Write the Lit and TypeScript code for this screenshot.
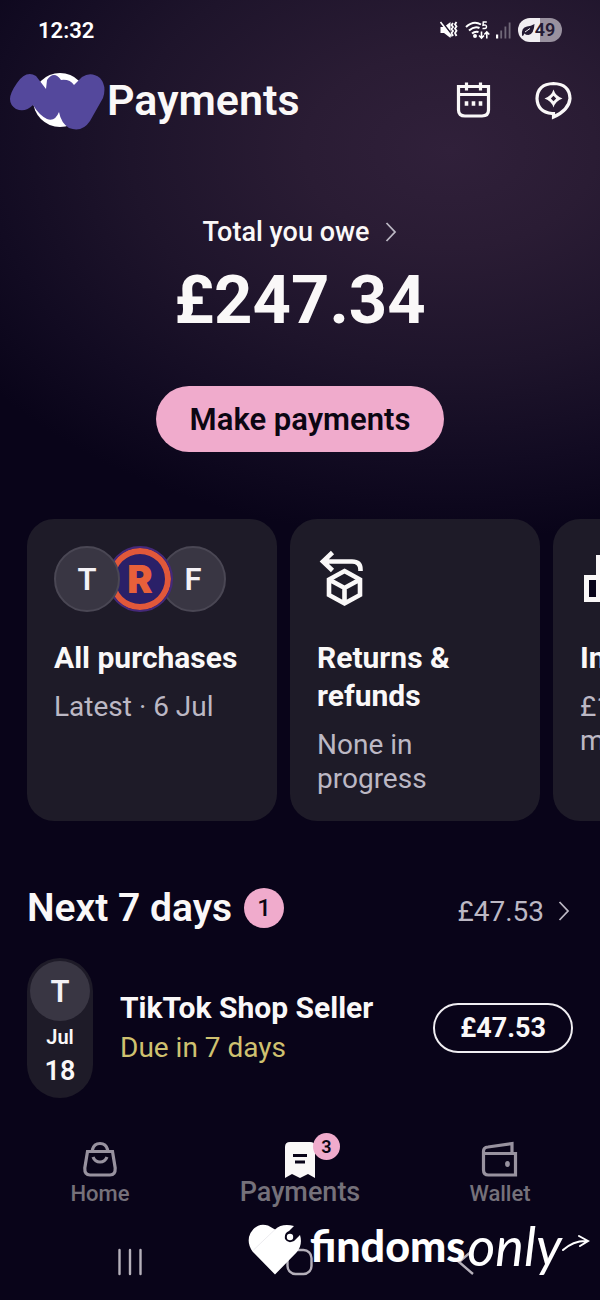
import { LitElement, html, css, svg } from "lit";
import { customElement, property } from "lit/decorators.js";

const chevron = html`<svg class="chevron" width="12" height="20" viewBox="0 0 12 20" aria-hidden="true">
  <path d="M1.500 1 10 10 1.500 19" fill="none" stroke="currentColor" stroke-width="1.800" />
</svg>`;

@customElement("status-bar")
class StatusBar extends LitElement {
  static styles = css`
    :host { display: flex; align-items: center; justify-content: space-between; height: 60px; padding: 0 38px; color: #fff; }
    svg { display: block; flex: none; }
    .time { font-size: 22px; font-weight: 600; }
    .icons { display: flex; align-items: center; gap: 5px; }
    .battery { display: flex; align-items: center; justify-content: center; box-sizing: border-box; width: 44px; height: 24px; padding-right: 4px; border-radius: 12px;
      background: linear-gradient(90deg, #f1eef2 49%, #99919f 49%); color: #241a33; font-size: 18px; font-weight: 600; line-height: 24px; }
  `;
  render() {
    return html`
      <span class="time">12:32</span>
      <div class="icons">
        <svg width="20" height="20" viewBox="0 0 20 20" fill="none" stroke="#fff" aria-hidden="true">
          <path d="M1.500 7H5L11.500 2V18L5 13H1.500Z" fill="#fff" stroke="none" />
          <path d="M3 2 14 16" stroke="#1f162c" stroke-width="2" />
          <path d="M1.500 2 12.500 16.500" stroke-width="1.600" />
          <path d="M14 3l-1.500 2 1.500 2-1.500 2 1.500 2-1.500 2 1.500 3M17.500 2l-1.500 2.200 1.500 2.200-1.500 2.200 1.500 2.200-1.500 2.200 1.500 3" stroke-width="1.800" />
        </svg>
        <svg width="27" height="20" viewBox="0 0 27 20" fill="none" stroke="#fff" stroke-width="2" aria-hidden="true">
          <path d="M2 7Q9.500 0 17 4.500M5 10.500Q10.500 5.500 15.500 8M8 13.500Q11 11 14.500 12" />
          <circle cx="11" cy="16" r="1" fill="#fff" />
          <path d="M22.800 2H19.300L19 5.200Q22.500 4.200 22.500 6.800 22.500 9.200 18.500 8.400" stroke-width="1.500" />
          <path d="M17.500 11.500V18M15 15.500l2.500 2.600 2.500-2.600M22.800 18.500V12M20.300 14.500l2.500-2.600 2.500 2.600" stroke-width="1.600" />
        </svg>
        <svg width="17" height="20" viewBox="0 0 17 20" aria-hidden="true">
          <path d="M0 14.500h2.200V18.500H0z" fill="#fff" />
          <path d="M4.300 10.500h1.800v8H4.300zM8.500 6.500h1.800v12H8.500zM12.700 2.500h1.800v16h-1.800z" fill="#706878" />
        </svg>
        <span class="battery">
          <svg width="14" height="14" viewBox="0 0 14 14" aria-hidden="true">
            <path d="M1 12.500Q0 4.500 6 3.500 10 3 13.500 1 13 11 7.500 12 4.500 12 3.500 10.500L2 13Z" fill="#241a33" />
            <path d="M4 9 9 5.500" stroke="#f1eef2" stroke-width="1" />
          </svg>49
        </span>
      </div>`;
  }
}

@customElement("summary-card")
class SummaryCard extends LitElement {
  @property() heading = "";
  @property() detail = "";
  static styles = css`
    :host { display: block; box-sizing: border-box; flex: 0 0 250px; padding: 27px 26px 25px 27px; border-radius: 27px; background: #1e1b28; }
    .art { display: flex; align-items: center; height: 66px; margin-bottom: 27px; }
    h3 { margin: 0 0 13px; font-size: 30px; line-height: 38px; font-weight: 700; color: #faf8f8; }
    p { margin: 0; font-size: 28px; line-height: 34px; color: #bcb8c4; white-space: pre-line; }
  `;
  render() {
    return html`<div class="art"><slot></slot></div><h3>${this.heading}</h3><p>${this.detail}</p>`;
  }
}

@customElement("app-root")
class AppRoot extends LitElement {
  static styles = css`
    :host { display: flex; flex-direction: column; box-sizing: border-box; min-height: 100vh; overflow: hidden;
      font-family: Roboto, "Liberation Sans", sans-serif; color: #faf8f8;
      background: radial-gradient(ellipse 580px 390px at 450px 150px, #30203a 0%, #2a1c34 25%, #1e142b 55%, #120b22 80%, rgba(9, 4, 25, 0) 100%), #090419; }
    button { margin: 0; padding: 0; border: 0; background: none; color: inherit; font: inherit; cursor: pointer; }
    a { color: inherit; text-decoration: none; }
    svg { display: block; flex: none; }

    .top { display: flex; align-items: center; height: 80px; padding: 0 27px 0 8px; }
    .top h1 { margin: 0; flex: 1; padding-left: 1px; font-size: 43px; line-height: 50px; font-weight: 600; }
    .actions { display: flex; gap: 40px; }

    .owed { display: flex; flex-direction: column; align-items: center; padding-top: 74px; }
    .owed a { display: flex; align-items: center; gap: 16px; font-size: 27px; line-height: 36px; font-weight: 500; }
    .owed .chevron, .sum .chevron { color: #bcb8c4; }
    .amount { margin: 8px 0 0; font-size: 67px; line-height: 84px; font-weight: 700; }
    .pay { margin-top: 44px; height: 66px; padding: 0 34px; border-radius: 33px; background: #f0abcc; color: #0b0612; font-size: 31px; font-weight: 600; }

    .cards { display: flex; gap: 13px; margin-top: 67px; padding-left: 27px; overflow: hidden; }
    .avatar { display: flex; align-items: center; justify-content: center; box-sizing: border-box; width: 66px; height: 66px; border-radius: 50%;
      border: 2px solid #4a4754; background: #393643; font-size: 31px; font-weight: 600; color: #f4f2f6; }
    .avatar + .avatar { margin-left: -13px; }
    .first { z-index: 2; }
    .brand { z-index: 1; border: 2px solid #45297a; background: #2a2068; box-shadow: inset 0 0 0 6px #e1583a;
      color: #e8603a; font-family: Inter, sans-serif; font-size: 38px; font-weight: 900; }

    .section { display: flex; align-items: center; margin-top: 61px; padding: 0 30px 0 27px; height: 52px; }
    .section h2 { margin: 0; font-size: 39px; line-height: 52px; font-weight: 600; }
    .count { width: 40px; margin-left: 12px; border-radius: 50%; background: #f0abcc; color: #0b0612; text-align: center; font-size: 24px; line-height: 40px; font-weight: 500; }
    .sum { display: flex; align-items: center; gap: 14px; margin-left: auto; padding-top: 6px; font-size: 28px; color: #bcb8c4; }

    .due { display: flex; align-items: center; margin-top: 24px; padding: 0 27px; }
    .date { display: flex; flex-direction: column; align-items: center; box-sizing: border-box; width: 66px; height: 140px; padding-top: 3px; border-radius: 33px; background: #1e1b28; font-weight: 600; }
    .date .avatar { width: 60px; height: 60px; border: 0; }
    .month { font-size: 20px; line-height: 32px; }
    .day { font-size: 27px; line-height: 36px; }
    .who { flex: 1; padding-left: 27px; }
    .who h3 { margin: 0; font-size: 30px; line-height: 40px; font-weight: 700; }
    .who p { margin: 0; font-size: 28px; line-height: 40px; color: #cfc170; }
    .price { box-sizing: border-box; height: 50px; padding: 0 25px; border: 2px solid #f0eef2; border-radius: 25px; font-size: 27px; font-weight: 700; }

    .tabs { display: grid; grid-template-columns: repeat(3, 1fr); margin-top: 38px; height: 78px; }
    .tabs a { display: flex; flex-direction: column; align-items: center; padding-top: 2px; font-size: 22px; line-height: 32px; font-weight: 500; color: #75717a; }
    .tabs .icon { position: relative; height: 40px; }
    .tabs .current { font-size: 27px; line-height: 28px; }
    .badge { position: absolute; left: 33px; top: -5px; width: 27px; border-radius: 50%; background: #f0abcc; color: #0b0612; text-align: center; font-size: 18px; line-height: 27px; font-weight: 600; }

    .system { position: relative; display: grid; grid-template-columns: 93px repeat(3, 1fr) 93px; align-items: center; justify-items: center; box-sizing: border-box; height: 84px; padding-top: 8px; margin-top: auto; }
    .system button:first-of-type { grid-column: 2; justify-self: start; padding-left: 24px; }
    .system button:last-of-type { justify-self: end; padding-right: 32px; }
    .watermark { position: absolute; right: 10px; top: 0; display: flex; align-items: center; height: 68px; color: #fff; font-family: Lato, sans-serif; }
    .watermark b { padding: 0 2px 8px 7px; font-size: 43px; font-weight: 900; line-height: 60px; }
    .watermark i { padding-bottom: 8px; font-size: 54px; font-weight: 400; line-height: 60px; }
    .watermark .arrow { padding-bottom: 12px; }
  `;

  private returnArt() {
    return svg`<g fill="none" stroke="#faf8f8" stroke-width="4.600">
      <path d="M15.500 2.500 6 11.500 15.500 20.500M7 11.500H35Q43.500 11.500 43.500 19.500V21" />
      <path d="M27.500 21 43 29.500V45L27.500 53.500 12 45V29.500ZM12 29.500 27.500 38 43 29.500M27.500 38V53" />
    </g>`;
  }

  render() {
    return html`
      <status-bar></status-bar>
      <header class="top">
        <svg width="98" height="62" viewBox="0 0 98 62" aria-hidden="true">
          <circle cx="52" cy="31" r="27" fill="#fff" />
          <path fill="#54489c" d="M2 30Q2 24 9 14 18 1 28 7L38 20 39 11Q46 1 53 11 62 10 66 16L74 8Q83 2 92 9 99 17 95 29L82 52Q74 64 61 59 53 54 51 43 47 53 39 50 31 46 25 36 17 44 8 40 2 36 2 30Z" />
        </svg>
        <h1>Payments</h1>
        <div class="actions">
          <button aria-label="Calendar"><svg width="40" height="40" viewBox="0 0 40 40" fill="none" stroke="#faf8f8" stroke-width="3.200">
            <path d="M5.500 6.500H35.500V30Q35.500 36 29 36H12Q5.500 36 5.500 30ZM5.500 14.500H35.500M13.500 2.500V10.500M27.500 2.500V10.500" />
            <path d="M13.500 21.200v4.600M20.500 21.200v4.600M27.500 21.200v4.600" stroke-width="3.600" />
          </svg></button>
          <button aria-label="Assistant"><svg width="40" height="40" viewBox="0 0 40 40" fill="none" stroke="#faf8f8" stroke-width="3.200">
            <path d="M20.500 37V33.500H19Q4.500 32 4 18.500 4.500 4 20.500 3.500 36.500 4 37 18.500 36 30 20.500 37Z" />
            <path d="M20.500 9.500Q22.500 16 29.500 18.500 22.500 21 20.500 27.500 18.500 21 11.500 18.500 18.500 16 20.500 9.500ZM20.500 15.800 17.800 18.500 20.500 21.200 23.200 18.500Z" fill="#faf8f8" fill-rule="evenodd" stroke="none" />
          </svg></button>
        </div>
      </header>

      <section class="owed">
        <a href="#owed">Total you owe ${chevron}</a>
        <p class="amount">£247.34</p>
        <button class="pay">Make payments</button>
      </section>

      <section class="cards">
        <summary-card heading="All purchases" detail="Latest · 6 Jul">
          <span class="avatar first">T</span><span class="avatar brand">R</span><span class="avatar">F</span>
        </summary-card>
        <summary-card heading="Returns &amp; refunds" detail="None in progress">
          <svg width="56" height="58" viewBox="0 0 56 58" aria-hidden="true">${this.returnArt()}</svg>
        </summary-card>
        <summary-card heading="In" .detail=${"£1\nm"}>
          <svg width="56" height="56" viewBox="0 0 56 56" fill="#090419" stroke="#faf8f8" stroke-width="5" aria-hidden="true">
            <path d="M6.500 26.500H18.500V48.500H6.500ZM18.500 6.500H32.500V48.500H18.500ZM32.500 18.500H46.500V48.500H32.500Z" />
          </svg>
        </summary-card>
      </section>

      <section>
        <div class="section">
          <h2>Next 7 days</h2><span class="count">1</span>
          <a class="sum" href="#next">£47.53 ${chevron}</a>
        </div>
        <div class="due">
          <div class="date"><span class="avatar">T</span><span class="month">Jul</span><span class="day">18</span></div>
          <div class="who"><h3>TikTok Shop Seller</h3><p>Due in 7 days</p></div>
          <button class="price">£47.53</button>
        </div>
      </section>

      <nav class="tabs">
        <a href="#home"><span class="icon"><svg width="40" height="40" viewBox="0 0 40 40" fill="none" stroke="#98929f" stroke-width="3.200">
          <path d="M7.500 13.500H32.500L35.200 30Q35.500 37 30 37H10Q4.500 37 4.800 30ZM12.500 13V11.500Q14 5.500 20 5.500 26 5.500 27.500 11.500V13M13 19Q15 24 20 24 25 24 27 19" />
        </svg></span>Home</a>
        <a class="current" href="#payments"><span class="icon"><svg width="40" height="40" viewBox="0 0 40 40">
          <path d="M5 40V9Q5 4 10 4H30Q35 4 35 9V40L28 36 20 40 12 36Z" fill="#faf8f8" />
          <path d="M13 17.500H27M15 24H25" stroke="#090419" stroke-width="3.200" />
        </svg><span class="badge">3</span></span>Payments</a>
        <a href="#wallet"><span class="icon"><svg width="40" height="40" viewBox="0 0 40 40" fill="none" stroke="#98929f" stroke-width="3.200">
          <path d="M3.500 15.500H35.500V37H8.500Q3.500 37 3.500 32V13Q3.500 9.500 8 9L32 5.500V15" />
          <ellipse cx="27.500" cy="26" rx="2.400" ry="3" fill="#98929f" stroke="none" />
        </svg></span>Wallet</a>
      </nav>

      <footer class="system">
        <button aria-label="Recent apps"><svg width="26" height="28" viewBox="0 0 26 28"><path d="M2.500 2V26M13 2V26M23.500 2V26" stroke="#b5b0ba" stroke-width="2.400" stroke-linecap="round" /></svg></button>
        <button aria-label="Home screen"><svg width="28" height="28" viewBox="0 0 28 28"><rect x="1.500" y="2" width="24" height="24" rx="8" fill="none" stroke="#b5b0ba" stroke-width="2.400" /></svg></button>
        <button aria-label="Back"><svg width="18" height="28" viewBox="0 0 18 28"><path d="M16 2 2 14 16 26" fill="none" stroke="#b5b0ba" stroke-width="2.400" /></svg></button>
        <div class="watermark">
          <svg width="56" height="54" viewBox="0 0 56 54" aria-hidden="true">
            <path d="M28 51.500 5.500 28.500Q-1 19 3.500 10 10-1 21 2.500L28 6.500Q35 0 47 3L42 8Q37 10 38 16 41 21 47 18L53 12Q56 22 49.500 29.500Z" fill="#fff" />
            <circle cx="43" cy="14" r="3.200" fill="#fff" />
            <path d="M6.500 27 28 6.500" stroke="#e4e2e8" stroke-width=".7" />
          </svg>
          <b>findoms</b><i>only</i>
          <svg class="arrow" width="28" height="20" viewBox="0 0 28 20" fill="none" stroke="#fff" stroke-width="2" stroke-linecap="round" aria-hidden="true"><path d="M1 16Q12 6 26 7M17 2 26 7 18 12" /></svg>
        </div>
      </footer>`;
  }
}
